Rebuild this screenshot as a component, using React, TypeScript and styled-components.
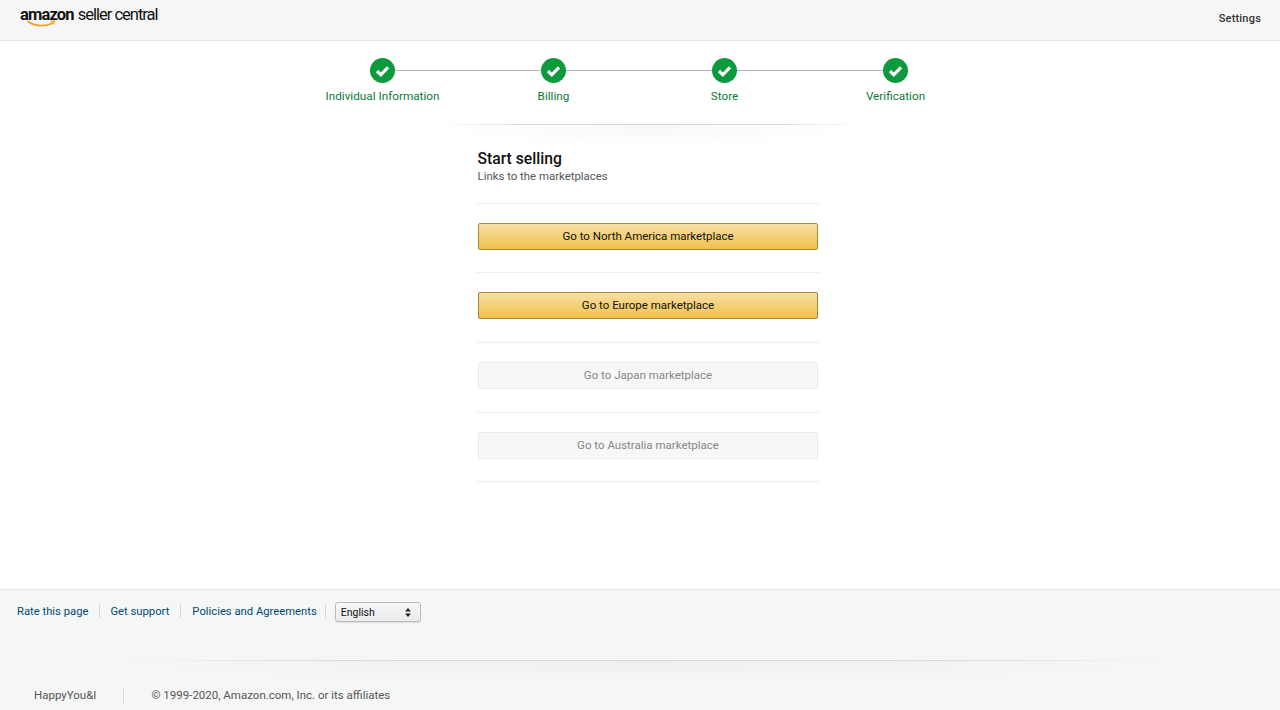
import * as React from 'react'
import styled, { createGlobalStyle } from 'styled-components'

const GlobalStyle = createGlobalStyle`
    html, body {
        margin: 0;
        padding: 0;
        background: #fff;
        font-family: Roboto, 'Liberation Sans', sans-serif;
    }
`

const Page = styled.div`
    display: flex;
    flex-direction: column;
    width: 1280px;
    height: 710px;
    overflow: hidden;
`

const Header = styled.header`
    display: flex;
    align-items: flex-start;
    justify-content: space-between;
    box-sizing: border-box;
    height: 41px;
    padding: 0 19px 0 20px;
    background: #f6f6f6;
    border-bottom: 1px solid #e3e3e3;
`

const Logo = styled.div`
    position: relative;
    display: flex;
    align-items: baseline;
    padding-top: 4px;
    color: #111;
    line-height: 22px;
`

const LogoBold = styled.span`
    font-size: 16.5px;
    font-weight: 700;
    letter-spacing: -0.85px;
`

const LogoLight = styled.span`
    margin-left: 4px;
    font-size: 16.5px;
    font-weight: 400;
    letter-spacing: -1px;
`

const Smile = styled.svg`
    position: absolute;
    left: 7px;
    top: 20px;
`

const SettingsLink = styled.span`
    margin-top: 12px;
    font-size: 11px;
    font-weight: 500;
    line-height: 14px;
    color: #333;
    letter-spacing: 0.2px;
`

const Main = styled.main`
    flex: 1;
    display: flex;
    flex-direction: column;
    align-items: center;
`

const Stepper = styled.ol`
    display: grid;
    grid-template-columns: repeat(4, 171px);
    margin: 17px 0 0;
    padding: 0;
    list-style: none;
    transform: translateX(-1px);
`

const Step = styled.li<{ $last?: boolean }>`
    position: relative;
    display: flex;
    flex-direction: column;
    align-items: center;
    gap: 4.5px;

    &::after {
        content: '';
        display: ${p => (p.$last ? 'none' : 'block')};
        position: absolute;
        top: 12px;
        left: 50%;
        width: 171px;
        height: 1px;
        background: #b5b5b5;
    }
`

const StepCircle = styled.svg`
    position: relative;
    z-index: 1;
    display: block;
`

const StepLabel = styled.span`
    font-size: 11.75px;
    line-height: 16px;
    color: #0b7a3a;
    white-space: nowrap;
`

const ShadowRule = styled.div<{ $width: number }>`
    flex: none;
    width: ${p => p.$width}px;
    height: 22px;
    background:
        radial-gradient(50% 100% at 50% 0, rgba(0, 0, 0, 0.03), rgba(0, 0, 0, 0) 100%),
        linear-gradient(90deg, rgba(226, 226, 226, 0), #dcdcdc 20%, #dcdcdc 80%, rgba(226, 226, 226, 0));
    background-size: 100% 100%, 100% 1px;
    background-repeat: no-repeat;
`

const TopRule = styled(ShadowRule)`
    margin: 20px 0 0 20px;
`

const Card = styled.section`
    width: 342px;
    margin: 3.2px 0 0 15px;
`

const Intro = styled.div`
    padding: 0 1px 19px;
`

const Title = styled.h1`
    margin: 0;
    font-size: 15.7px;
    font-weight: 500;
    line-height: 19px;
    color: #111;
`

const Subtitle = styled.p`
    margin: 1px 0 0;
    font-size: 11.4px;
    line-height: 15px;
    color: #555;
`

const Row = styled.div`
    padding: 19px 1px 22.67px;
    border-top: 1px solid #eeeeee;

    &:last-child {
        padding: 0;
        height: 1px;
    }
`

const MarketButton = styled.button<{ $enabled?: boolean }>`
    display: block;
    box-sizing: border-box;
    width: 340px;
    height: 27px;
    padding: 0 0 0 1px;
    border-radius: 2px;
    font-family: inherit;
    font-size: 11.5px;
    line-height: 25px;
    text-align: center;
    border: 1px solid ${p => (p.$enabled ? '#a88734' : '#e9eaea')};
    color: ${p => (p.$enabled ? '#111' : '#868686')};
    background: ${p => (p.$enabled ? 'linear-gradient(#f7dfa5, #f0c14b)' : '#f6f7f8')};
`

const Footer = styled.footer`
    display: flex;
    flex-direction: column;
    height: 121px;
    box-sizing: border-box;
    background: #f5f6f6;
    border-top: 1px solid #e5e6e6;
`

const FooterLinks = styled.nav`
    display: flex;
    align-items: flex-start;
    height: 36px;
    padding: 12px 0 0 17px;
`

const FooterLink = styled.a`
    font-size: 11.25px;
    line-height: 19px;
    color: #004b74;
    white-space: nowrap;
`

const VRule = styled.span<{ $gap: number }>`
    flex: none;
    width: 1px;
    height: 14px;
    margin: 2px ${p => p.$gap}px 0;
    background: #d5d6d6;
`

const LangSelect = styled.div`
    display: flex;
    align-items: center;
    justify-content: space-between;
    box-sizing: border-box;
    width: 86px;
    height: 20px;
    padding: 0 9px 0 5px;
    font-size: 10.5px;
    color: #111;
    background: linear-gradient(#f6f7f8, #e9eaeb);
    border: 1px solid #b9bbbb;
    border-radius: 3px;
    box-shadow: 0 1px 1px rgba(0, 0, 0, 0.1);
`

const Caret = styled.svg`
    display: block;
`

const FooterRule = styled(ShadowRule)`
    margin: 22px 0 0 125px;
`

const Legal = styled.div`
    display: flex;
    align-items: center;
    margin-top: 5px;
    padding-left: 34px;
    font-size: 11.5px;
    line-height: 16px;
    color: #555;
`

const CHECK_STEPS = ['Individual Information', 'Billing', 'Store', 'Verification']

const MARKETS = [
    { name: 'North America', enabled: true },
    { name: 'Europe', enabled: true },
    { name: 'Japan', enabled: false },
    { name: 'Australia', enabled: false },
]

const CheckCircle = () => (
    <StepCircle width="25" height="25" viewBox="0 0 25 25">
        <circle cx="12.5" cy="12.5" r="12.5" fill="#0d9a3e" />
        <path d="M7 13l3.8 3.8L18 9.3" fill="none" stroke="#fff" strokeWidth="3.2" strokeLinejoin="miter" />
    </StepCircle>
)

export default function App() {
    return (
        <Page>
            <GlobalStyle />
            <Header>
                <Logo>
                    <LogoBold>amazon</LogoBold>
                    <LogoLight>seller central</LogoLight>
                    <Smile width="30" height="9" viewBox="0 0 30 9">
                        <path d="M1 1.5c7 5 17 5.5 25 1.5" fill="none" stroke="#f0a21e" strokeWidth="1.7" strokeLinecap="round" />
                        <path d="M23.5 1.5l4-.5-.8 3.6" fill="none" stroke="#f0a21e" strokeWidth="1.1" />
                    </Smile>
                </Logo>
                <SettingsLink>Settings</SettingsLink>
            </Header>

            <Main>
                <Stepper>
                    {CHECK_STEPS.map((label, i) => (
                        <Step key={label} $last={i === CHECK_STEPS.length - 1}>
                            <CheckCircle />
                            <StepLabel>{label}</StepLabel>
                        </Step>
                    ))}
                </Stepper>
                <TopRule $width={420} />
                <Card>
                    <Intro>
                        <Title>Start selling</Title>
                        <Subtitle>Links to the marketplaces</Subtitle>
                    </Intro>
                    {MARKETS.map(m => (
                        <Row key={m.name}>
                            <MarketButton $enabled={m.enabled}>Go to {m.name} marketplace</MarketButton>
                        </Row>
                    ))}
                    <Row />
                </Card>
            </Main>

            <Footer>
                <FooterLinks>
                    <FooterLink>Rate this page</FooterLink>
                    <VRule $gap={10.5} />
                    <FooterLink>Get support</FooterLink>
                    <VRule $gap={11} />
                    <FooterLink>Policies and Agreements</FooterLink>
                    <VRule $gap={8.5} />
                    <LangSelect>
                        English
                        <Caret width="6" height="9" viewBox="0 0 6 9">
                            <path d="M3 0l3 3.5H0zM3 9L0 5.5h6z" fill="#222" />
                        </Caret>
                    </LangSelect>
                </FooterLinks>
                <FooterRule $width={1036} />
                <Legal>
                    HappyYou&amp;I
                    <VRule $gap={27} />
                    © 1999-2020, Amazon.com, Inc. or its affiliates
                </Legal>
            </Footer>
        </Page>
    )
}
